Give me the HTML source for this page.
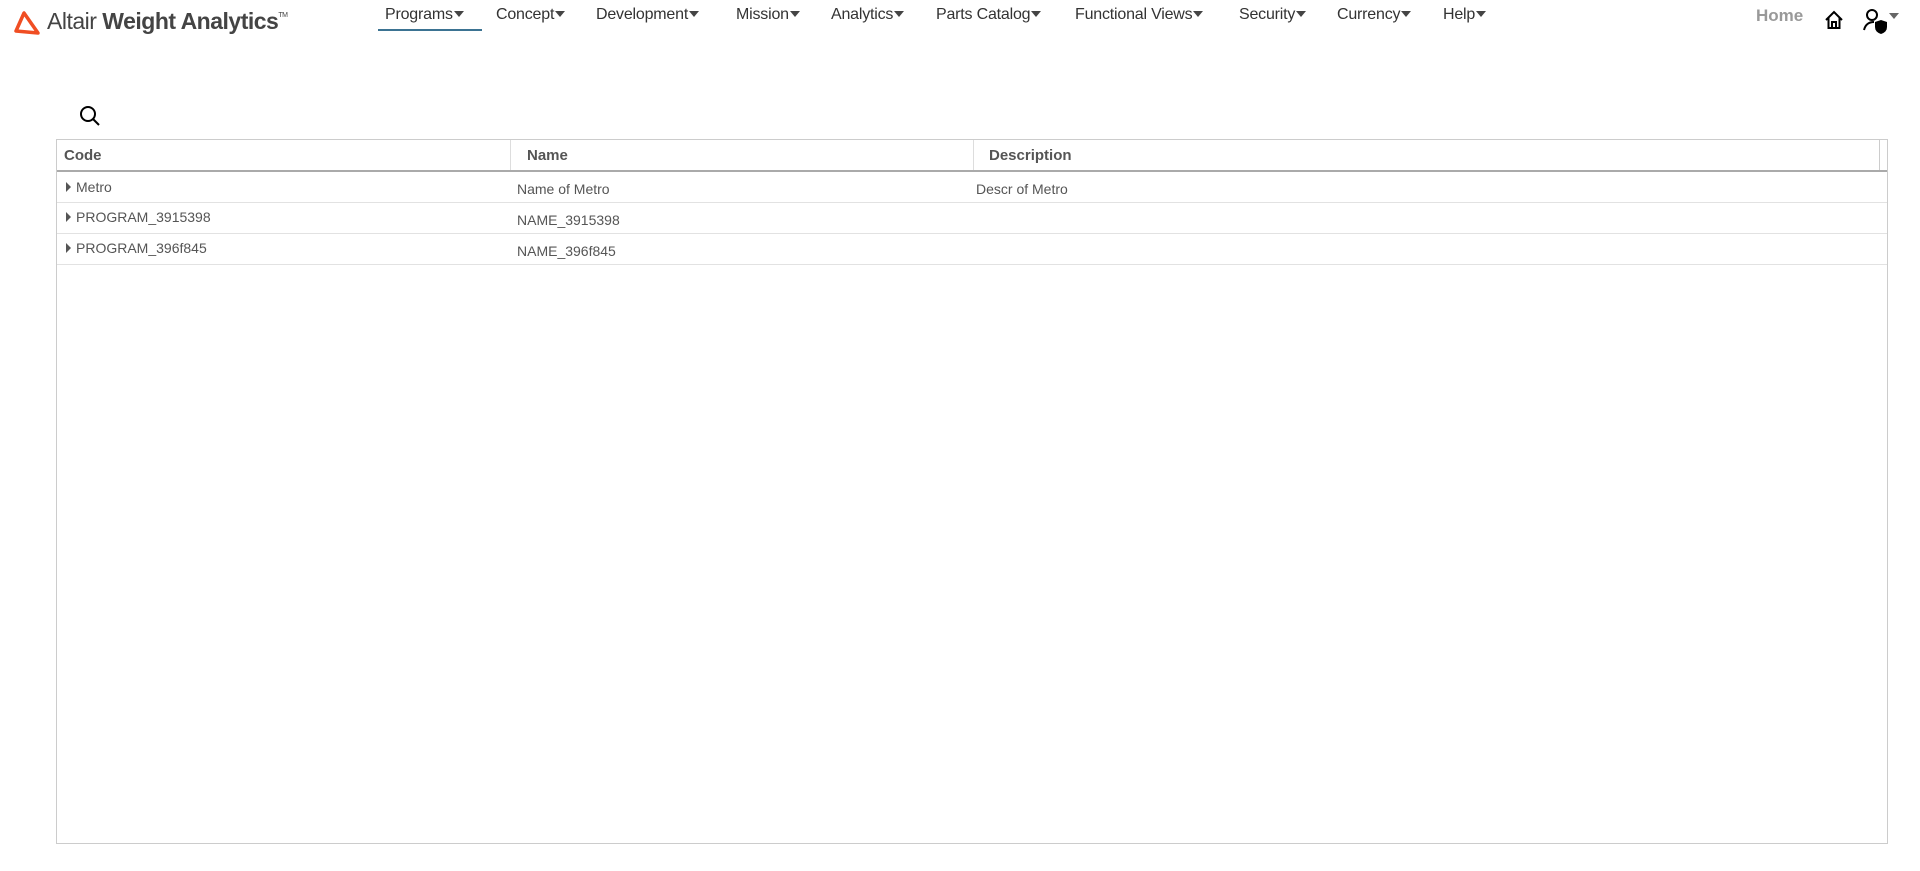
<!DOCTYPE html>
<html><head><style>
body{margin:0;width:1920px;height:871px;background:#fff;font-family:"Liberation Sans",sans-serif;position:relative;overflow:hidden}
.a{position:absolute;white-space:nowrap}
.nav{font-size:16px;color:#333;top:6px;letter-spacing:-0.2px}
.nav i{display:inline-block;width:0;height:0;border-left:5px solid transparent;border-right:5px solid transparent;border-top:6px solid #444;margin-left:1px;vertical-align:2px}
.cell{font-size:14px;color:#555}
.hd{font-size:15px;font-weight:bold;color:#555;top:147px}
.rl{position:absolute;left:57px;width:1830px;height:1px;background:#e2e2e2}
.tri{display:inline-block;width:0;height:0;border-top:5px solid transparent;border-bottom:5px solid transparent;border-left:5px solid #555;margin-right:5px;vertical-align:0}
</style></head><body>
<svg class="a" style="left:13px;top:11px" width="28" height="24" viewBox="0 0 28 24"><path d="M11 2 L3 20 L25 22 Z" fill="none" stroke="#f04e23" stroke-width="3.5" stroke-linejoin="round"/></svg>
<div class="a" style="left:47px;top:8px;font-size:23px;color:#444;letter-spacing:-0.5px">Altair <b style="color:#444">Weight Analytics</b><sup style="font-size:7px;vertical-align:12px">TM</sup></div>
<div class="a nav" style="left:385px">Programs<i></i></div>
<div class="a" style="left:378px;top:29px;width:104px;height:2px;background:#3b7392"></div>
<div class="a nav" style="left:496px">Concept<i></i></div>
<div class="a nav" style="left:596px">Development<i></i></div>
<div class="a nav" style="left:736px">Mission<i></i></div>
<div class="a nav" style="left:831px">Analytics<i></i></div>
<div class="a nav" style="left:936px">Parts Catalog<i></i></div>
<div class="a nav" style="left:1075px">Functional Views<i></i></div>
<div class="a nav" style="left:1239px">Security<i></i></div>
<div class="a nav" style="left:1337px">Currency<i></i></div>
<div class="a nav" style="left:1443px">Help<i></i></div>
<div class="a" style="left:1756px;top:6px;font-size:17px;font-weight:bold;color:#999">Home</div>
<svg class="a" style="left:1824px;top:10px" width="20" height="20" viewBox="0 0 20 20"><path d="M2 10 L10 2 L18 10 M4.5 8 V18 H15.5 V8 M8 18 V12 H12 V18" fill="none" stroke="#000" stroke-width="2"/></svg>
<svg class="a" style="left:1862px;top:8px" width="40" height="26" viewBox="0 0 40 26"><circle cx="10" cy="7" r="5" fill="none" stroke="#000" stroke-width="2"/><path d="M2 22 Q4 14 12 14" fill="none" stroke="#000" stroke-width="2"/><path d="M13 14 L19 12 L25 14 V19 Q25 24 19 26 Q13 24 13 19 Z" fill="#000"/><path d="M27 5 L37 5 L32 11 Z" fill="#666"/></svg>
<svg class="a" style="left:79px;top:105px" width="22" height="22" viewBox="0 0 22 22"><circle cx="9" cy="9" r="7" fill="none" stroke="#000" stroke-width="2"/><path d="M14 14 L20 20" stroke="#000" stroke-width="2"/></svg>
<div class="a" style="left:56px;top:139px;width:1830px;height:703px;border:1px solid #ccc"></div>
<div class="a" style="left:57px;top:170px;width:1830px;height:2px;background:#aaa"></div>
<div class="a" style="left:510px;top:140px;width:1px;height:30px;background:#ddd"></div>
<div class="a" style="left:973px;top:140px;width:1px;height:30px;background:#ddd"></div>
<div class="a" style="left:1879px;top:140px;width:1px;height:30px;background:#ccc"></div>
<div class="a hd" style="left:64px">Code</div>
<div class="a hd" style="left:527px">Name</div>
<div class="a hd" style="left:989px">Description</div>
<div class="rl" style="top:202px"></div>
<div class="rl" style="top:233px"></div>
<div class="rl" style="top:264px"></div>
<div class="a cell" style="left:66px;top:179px"><span class="tri"></span>Metro</div>
<div class="a cell" style="left:517px;top:181px">Name of Metro</div>
<div class="a cell" style="left:976px;top:181px">Descr of Metro</div>
<div class="a cell" style="left:66px;top:209px"><span class="tri"></span>PROGRAM_3915398</div>
<div class="a cell" style="left:517px;top:212px">NAME_3915398</div>
<div class="a cell" style="left:66px;top:240px"><span class="tri"></span>PROGRAM_396f845</div>
<div class="a cell" style="left:517px;top:243px">NAME_396f845</div>
</body></html>
